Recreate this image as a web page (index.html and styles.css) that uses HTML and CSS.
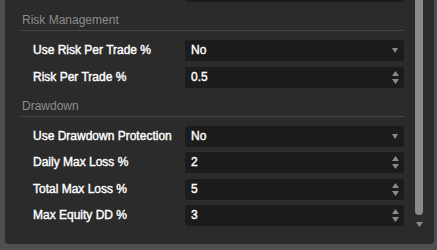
FILE: index.html
```html
<!DOCTYPE html>
<html>
<head>
<meta charset="utf-8">
<link rel="stylesheet" href="styles.css">
</head>
<body>
<div class="panel">
  <div class="content">
    <div class="prev-field"></div>

    <div class="section-title">Risk Management</div>
    <div class="rows">
      <div class="row">
        <span class="label">Use Risk Per Trade %</span>
        <div class="field">
          <span class="value">No</span>
          <svg class="caret" width="6" height="5" viewBox="0 0 6 5"><path d="M0 0H6L3 5Z"/></svg>
        </div>
      </div>
      <div class="row">
        <span class="label">Risk Per Trade %</span>
        <div class="field">
          <span class="value">0.5</span>
          <svg class="spin" width="7" height="13" viewBox="0 0 7 13"><path d="M3.5 0L7 5H0Z M0 8H7L3.5 13Z"/></svg>
        </div>
      </div>
    </div>

    <div class="section-title">Drawdown</div>
    <div class="rows">
      <div class="row">
        <span class="label">Use Drawdown Protection</span>
        <div class="field">
          <span class="value">No</span>
          <svg class="caret" width="6" height="5" viewBox="0 0 6 5"><path d="M0 0H6L3 5Z"/></svg>
        </div>
      </div>
      <div class="row">
        <span class="label">Daily Max Loss %</span>
        <div class="field">
          <span class="value">2</span>
          <svg class="spin" width="7" height="13" viewBox="0 0 7 13"><path d="M3.5 0L7 5H0Z M0 8H7L3.5 13Z"/></svg>
        </div>
      </div>
      <div class="row">
        <span class="label">Total Max Loss %</span>
        <div class="field">
          <span class="value">5</span>
          <svg class="spin" width="7" height="13" viewBox="0 0 7 13"><path d="M3.5 0L7 5H0Z M0 8H7L3.5 13Z"/></svg>
        </div>
      </div>
      <div class="row">
        <span class="label">Max Equity DD %</span>
        <div class="field">
          <span class="value">3</span>
          <svg class="spin" width="7" height="13" viewBox="0 0 7 13"><path d="M3.5 0L7 5H0Z M0 8H7L3.5 13Z"/></svg>
        </div>
      </div>
    </div>
  </div>
  <div class="scrollbar">
    <div class="thumb"></div>
    <svg class="scroll-down" width="7" height="5" viewBox="0 0 7 5"><path d="M0 0H7L3.5 5Z"/></svg>
  </div>
</div>
</body>
</html>
```

FILE: styles.css
```css
html, body {
  margin: 0;
  padding: 0;
}
body {
  background: #4f4f4f;
  width: 437px;
  height: 250px;
  overflow: hidden;
  font-family: "Liberation Sans", Arial, sans-serif;
  font-size: 12px;
}
.panel {
  margin-left: 5px;
  width: 429px;
  height: 244px;
  background: #2b2b2b;
  border-radius: 0 0 3px 3px;
  display: flex;
  overflow: hidden;
}
.content {
  width: 383px;
  padding-left: 16px;
  display: flex;
  flex-direction: column;
}
.prev-field {
  margin-left: 164px;
  height: 2px;
  background: #1c1c1c;
  border-radius: 0 0 3px 3px;
}
.section-title {
  margin-top: 11px;
  line-height: 14px;
  padding-bottom: 3px;
  padding-left: 1px;
  color: #8d8d8d;
  border-bottom: 1px solid #474747;
}
.rows {
  margin-top: 9px;
  display: flex;
  flex-direction: column;
  gap: 5.5px;
}
.row {
  display: flex;
  align-items: center;
  height: 21px;
}
.label {
  width: 152px;
  padding-left: 12px;
  color: #ffffff;
  -webkit-text-stroke: 0.4px #ffffff;
  line-height: 21px;
}
.field {
  flex: 1;
  height: 21px;
  background: #1c1c1c;
  border-radius: 3px;
  display: flex;
  align-items: center;
  padding: 0 5px 0 6px;
}
.value {
  flex: 1;
  color: #ffffff;
  -webkit-text-stroke: 0.4px #ffffff;
  line-height: 21px;
}
.caret, .spin, .scroll-down {
  fill: #8a8a8a;
  display: block;
}
.caret {
  margin-right: 1px;
}
.scrollbar {
  margin-left: 11px;
  width: 8px;
  display: flex;
  flex-direction: column;
  align-items: center;
}
.thumb {
  width: 8px;
  height: 215px;
  background: #8a8a8a;
  border-radius: 0 0 4px 4px;
}
.scroll-down {
  margin-top: 7px;
}
```
